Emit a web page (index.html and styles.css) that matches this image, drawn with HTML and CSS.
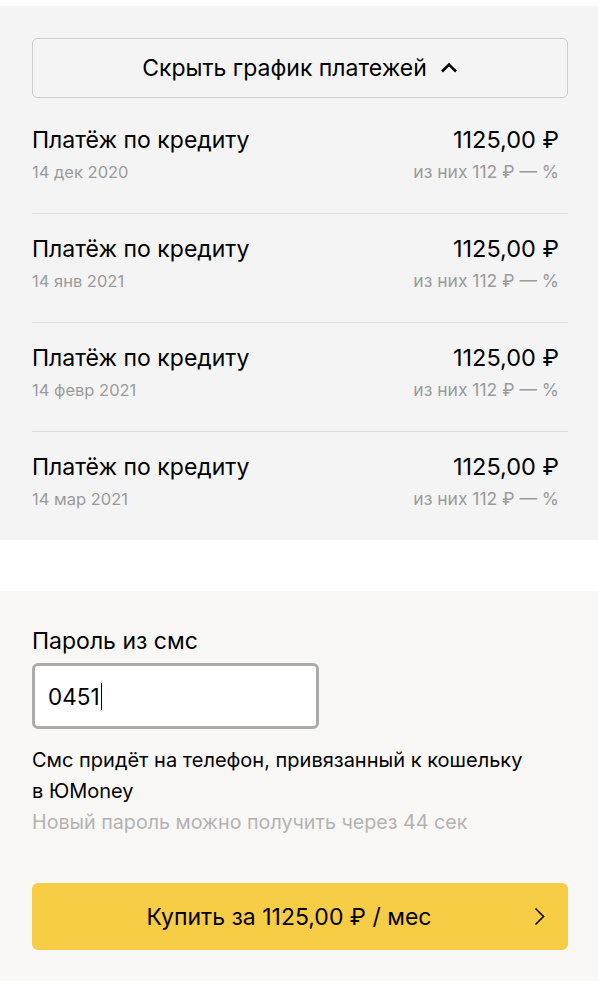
FILE: index.html
```html
<!DOCTYPE html>
<html lang="ru">
<head>
<meta charset="utf-8">
<title>График платежей</title>
<link rel="stylesheet" href="styles.css">
</head>
<body>
<section class="schedule">
  <button class="toggle" type="button">
    <span>Скрыть график платежей</span>
    <svg class="chev-up" width="18" height="11" viewBox="0 0 18 11"><path d="M2 9.5 L9 2.5 L16 9.5" fill="none" stroke="#000" stroke-width="2.6"/></svg>
  </button>
  <ul class="payments">
    <li class="payment">
      <div class="line"><span class="title">Платёж по кредиту</span><span class="amount">1125,00 ₽</span></div>
      <div class="line sub"><span>14 дек 2020</span><span class="part">из них 112 ₽ — %</span></div>
    </li>
    <li class="payment">
      <div class="line"><span class="title">Платёж по кредиту</span><span class="amount">1125,00 ₽</span></div>
      <div class="line sub"><span>14 янв 2021</span><span class="part">из них 112 ₽ — %</span></div>
    </li>
    <li class="payment">
      <div class="line"><span class="title">Платёж по кредиту</span><span class="amount">1125,00 ₽</span></div>
      <div class="line sub"><span>14 февр 2021</span><span class="part">из них 112 ₽ — %</span></div>
    </li>
    <li class="payment">
      <div class="line"><span class="title">Платёж по кредиту</span><span class="amount">1125,00 ₽</span></div>
      <div class="line sub"><span>14 мар 2021</span><span class="part">из них 112 ₽ — %</span></div>
    </li>
  </ul>
</section>
<section class="confirm">
  <label class="label">Пароль из смс</label>
  <div class="field"><span class="value">0451</span><span class="caret"></span></div>
  <p class="hint">Смс придёт на телефон, привязанный к кошельку<br>в ЮMoney</p>
  <p class="timer">Новый пароль можно получить через 44 сек</p>
  <button class="buy" type="button">
    <span>Купить за 1125,00 ₽ / мес</span>
    <svg class="chev-right" width="12" height="19" viewBox="0 0 12 19"><path d="M1.5 1.5 L9.5 9.5 L1.5 17.5" fill="none" stroke="#000" stroke-width="1.6"/></svg>
  </button>
</section>
</body>
</html>
```

FILE: styles.css
```css
* { box-sizing: border-box; }
html, body { margin: 0; padding: 0; background: #fff; }
body {
  font-family: Inter, "Liberation Sans", Arial, sans-serif;
  color: #000;
}
.schedule {
  margin-top: 6px;
  background: #f4f4f4;
  padding: 32px 30px 0 32px;
}
.toggle {
  width: 100%;
  height: 60px;
  border: 1px solid #cdcdcd;
  border-radius: 5px;
  background: #f4f4f4;
  display: flex;
  align-items: center;
  justify-content: center;
  gap: 13px;
  font-family: inherit;
  font-size: 23px;
  color: #000;
  padding: 0;
}
.chev-up { display: block; margin-top: -1px; }
.payments {
  list-style: none;
  margin: 7px 0 0;
  padding: 0;
}
.payment {
  padding: 22px 9px 31px 0;
  border-bottom: 1px solid #dcdcdc;
  display: flex;
  flex-direction: column;
  gap: 9px;
}
.payment:last-child { border-bottom: none; }
.line {
  display: flex;
  justify-content: space-between;
  align-items: baseline;
  font-size: 23px;
  line-height: 26px;
}
.amount { font-size: 23.5px; }
.line.sub {
  font-size: 16.5px;
  line-height: 20px;
  color: #9b9b9b;
}
.part { font-size: 17.5px; }
.confirm {
  margin-top: 51px;
  background: #f9f8f6;
  padding: 38px 30px 31px 32px;
  display: flex;
  flex-direction: column;
}
.label {
  font-size: 23px;
  line-height: 24px;
}
.field {
  margin-top: 10px;
  width: 287px;
  height: 66px;
  border: 3px solid #acacac;
  border-radius: 6px;
  background: #fff;
  display: flex;
  align-items: center;
  padding-left: 13px;
  font-size: 22.5px;
}
.caret {
  width: 1.5px;
  height: 27px;
  background: #000;
  margin-left: 1px;
}
.hint {
  margin: 16px 0 0;
  font-size: 20px;
  line-height: 31px;
}
.timer {
  margin: 0;
  font-size: 19.7px;
  line-height: 31px;
  color: #b3b3b3;
}
.buy {
  margin-top: 45px;
  width: 100%;
  height: 67px;
  border: none;
  border-radius: 6px;
  background: #f8cd46;
  position: relative;
  display: flex;
  align-items: center;
  justify-content: center;
  font-family: inherit;
  font-size: 23px;
  color: #000;
  padding: 0 22px 0 0;
}
.chev-right {
  position: absolute;
  right: 22px;
  top: 24px;
}
```
